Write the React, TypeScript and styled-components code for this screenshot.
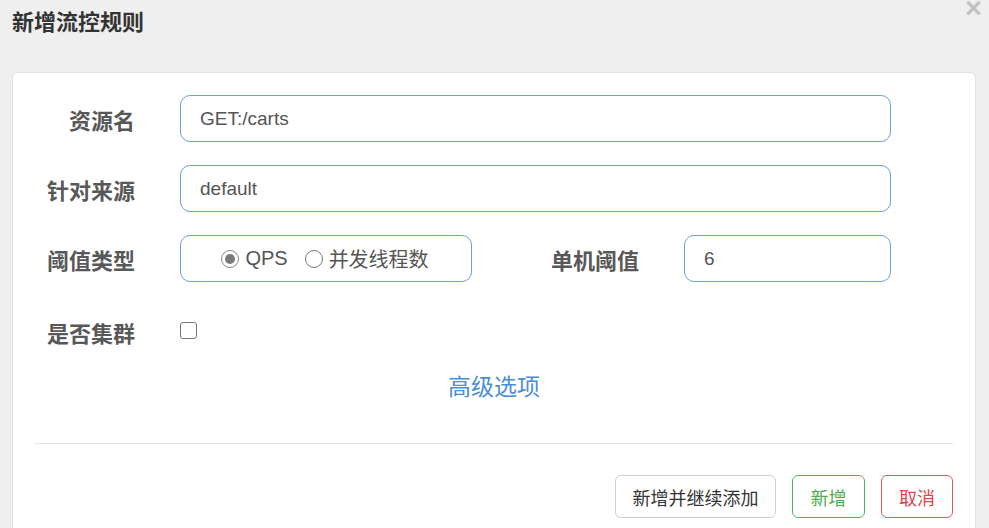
import React, { useState } from 'react';
import styled, { createGlobalStyle } from 'styled-components';

const GlobalStyle = createGlobalStyle`
  html, body {
    margin: 0;
    padding: 0;
    background: #efefef;
    font-family: "Liberation Sans", "Noto Sans CJK SC", sans-serif;
    overflow: hidden;
  }
  * { box-sizing: border-box; }
`;

const Page = styled.div`
  position: relative;
  width: 989px;
  height: 528px;
  background: #efefef;
  overflow: hidden;
`;

const Header = styled.div`
  height: 72px;
  padding: 9px 12px 0 12px;
`;

const Title = styled.h4`
  margin: 0;
  font-size: 22px;
  line-height: 28px;
  font-weight: 700;
  color: #333;
`;

const CloseButton = styled.button`
  position: absolute;
  top: -8px;
  right: 7px;
  border: none;
  background: transparent;
  padding: 0;
  font-family: "Liberation Sans", sans-serif;
  font-size: 29px;
  font-weight: 700;
  line-height: 32px;
  color: #c2c2c2;
  cursor: pointer;
`;

const Card = styled.div`
  margin-left: 12px;
  width: 964px;
  background: #fff;
  border: 1px solid #e2e2e2;
  border-radius: 6px;
  padding: 22px 22px 30px 22px;
`;

const Row = styled.div<{ $height?: number }>`
  display: flex;
  align-items: center;
  height: ${(p) => p.$height ?? 47}px;
  margin-bottom: 23px;
`;

const Label = styled.label<{ $width?: number }>`
  width: ${(p) => p.$width ?? 100}px;
  flex-shrink: 0;
  margin-right: 45px;
  text-align: right;
  font-size: 22px;
  font-weight: 700;
  color: #585858;
  white-space: nowrap;
`;

const Input = styled.input<{ $width: number }>`
  width: ${(p) => p.$width}px;
  height: 47px;
  padding: 0 19px;
  border: 1px solid #6f9fd2;
  border-radius: 10px;
  font-family: "Liberation Sans", "Noto Sans CJK SC", sans-serif;
  font-size: 19px;
  color: #555;
  background: #fff;
  outline: none;
`;

const RadioBox = styled.div`
  width: 292px;
  height: 47px;
  border: 1px solid #6f9fd2;
  border-radius: 10px;
  display: flex;
  align-items: center;
  justify-content: center;
  gap: 17px;
  padding-right: 2px;
`;

const RadioOption = styled.label`
  display: flex;
  align-items: center;
  gap: 6px;
  font-size: 20px;
  color: #555;
  cursor: pointer;
`;

const RadioCircle = styled.span<{ $checked: boolean }>`
  width: 18px;
  height: 18px;
  border-radius: 50%;
  border: 1.5px solid ${(p) => (p.$checked ? '#8a8a8a' : '#767676')};
  background: #fff;
  display: flex;
  align-items: center;
  justify-content: center;
  &::after {
    content: '';
    width: 10px;
    height: 10px;
    border-radius: 50%;
    background: ${(p) => (p.$checked ? '#7a7a7a' : 'transparent')};
  }
`;

const Checkbox = styled.span`
  width: 17px;
  height: 17px;
  border: 1.5px solid #767676;
  border-radius: 3px;
  background: #fff;
  margin-top: -3px;
`;

const AdvancedLink = styled.a`
  display: block;
  text-align: center;
  font-size: 23px;
  line-height: 30px;
  color: #4a8ed6;
  text-decoration: none;
  margin-top: -10px;
  cursor: pointer;
`;

const Divider = styled.div`
  height: 1px;
  background: #e5e5e5;
  margin: 41px 0 31px 0;
`;

const Footer = styled.div`
  display: flex;
  justify-content: flex-end;
  gap: 16px;
`;

const Button = styled.button<{ $tone: 'default' | 'success' | 'danger'; $width: number }>`
  width: ${(p) => p.$width}px;
  height: 43px;
  padding: 0;
  border-radius: 6px;
  background: #fff;
  font-family: "Liberation Sans", "Noto Sans CJK SC", sans-serif;
  font-size: 18px;
  cursor: pointer;
  border: 1px solid
    ${(p) => (p.$tone === 'success' ? '#4cb85c' : p.$tone === 'danger' ? '#e25660' : '#cfcfcf')};
  color: ${(p) => (p.$tone === 'success' ? '#4cae4c' : p.$tone === 'danger' ? '#e0444f' : '#333')};
`;

export default function App() {
  const [mode, setMode] = useState<'qps' | 'thread'>('qps');

  return (
    <Page>
      <GlobalStyle />
      <Header>
        <Title>新增流控规则</Title>
      </Header>
      <CloseButton aria-label="close">×</CloseButton>

      <Card>
        <Row>
          <Label>资源名</Label>
          <Input $width={711} defaultValue="GET:/carts" />
        </Row>

        <Row>
          <Label>针对来源</Label>
          <Input $width={711} defaultValue="default" />
        </Row>

        <Row>
          <Label>阈值类型</Label>
          <RadioBox>
            <RadioOption onClick={() => setMode('qps')}>
              <RadioCircle $checked={mode === 'qps'} />
              QPS
            </RadioOption>
            <RadioOption onClick={() => setMode('thread')}>
              <RadioCircle $checked={mode === 'thread'} />
              并发线程数
            </RadioOption>
          </RadioBox>
          <Label $width={167}>单机阈值</Label>
          <Input $width={207} defaultValue="6" />
        </Row>

        <Row $height={54}>
          <Label>是否集群</Label>
          <Checkbox />
        </Row>

        <AdvancedLink>高级选项</AdvancedLink>

        <Divider />

        <Footer>
          <Button $tone="default" $width={161}>新增并继续添加</Button>
          <Button $tone="success" $width={73}>新增</Button>
          <Button $tone="danger" $width={72}>取消</Button>
        </Footer>
      </Card>
    </Page>
  );
}
